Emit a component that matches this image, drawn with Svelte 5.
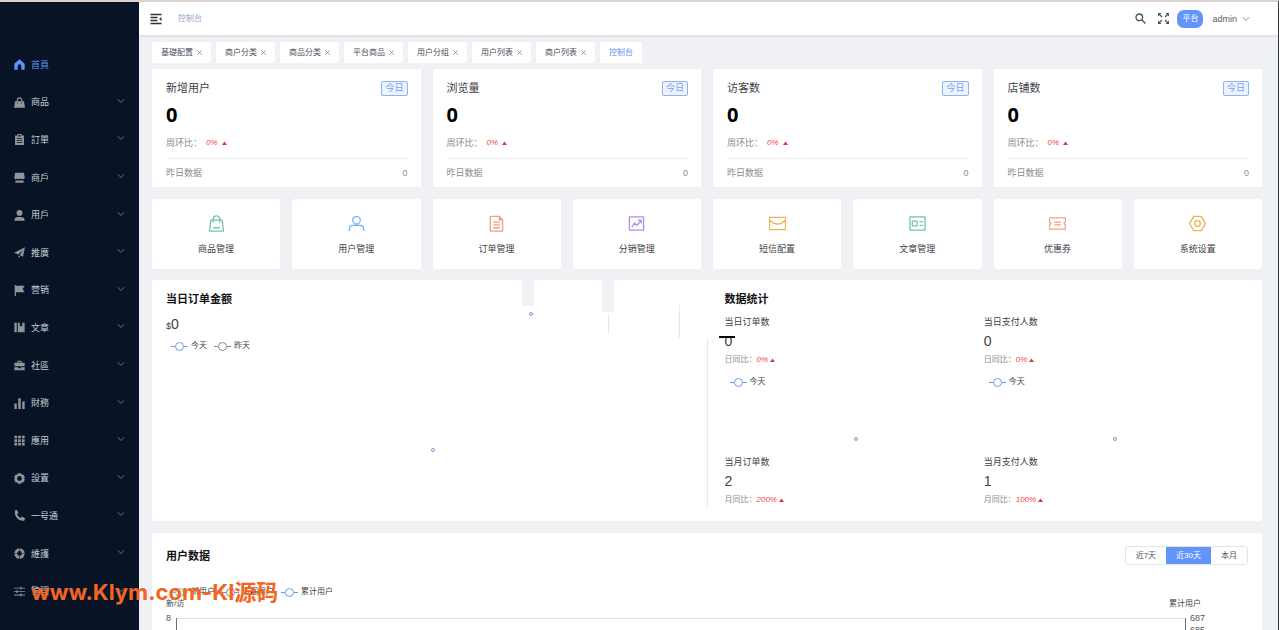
<script lang="ts">
	interface MenuItem {
		label: string;
		icon: string;
	}

	const menu: MenuItem[] = [
		{ label: '首頁', icon: 'home' },
		{ label: '商品', icon: 'bag' },
		{ label: '訂單', icon: 'order' },
		{ label: '商戶', icon: 'shop' },
		{ label: '用戶', icon: 'user' },
		{ label: '推廣', icon: 'plane' },
		{ label: '营销', icon: 'flag' },
		{ label: '文章', icon: 'book' },
		{ label: '社區', icon: 'case' },
		{ label: '財務', icon: 'bars' },
		{ label: '應用', icon: 'apps' },
		{ label: '設置', icon: 'gear' },
		{ label: '一号通', icon: 'phone' },
		{ label: '維護', icon: 'ring' },
		{ label: '管理', icon: 'sliders' }
	];

	// solid glyphs on a 16x16 grid
	const glyphs: Record<string, string> = {
		home: 'M8 .5.5 7v8.5h4.8v-5a2.7 2.7 0 0 1 5.4 0v5h4.8V7z',
		bag: 'M4 6V4.5a4 4 0 0 1 8 0V6h2.5L16 15.5H0L1.5 6zM5.5 6h5V4.5a2.5 2.5 0 0 0-5 0zM4.5 8v1.5h1V8zM10.5 8v1.5h1V8z',
		order: 'M5 0h6v2h3.5v14h-13V2H5zM6.5 1.5v2h3v-2zM4 6v1.2h8V6zM4 9v1.2h8V9zM4 12v1.2h8V12z',
		shop: 'M1.5 1h13L15.5 8v1.5c-1.5 1.5-2.5 1.5-3.5 0-1.5 1.5-3 1.5-4 0-1.5 1.5-3 1.5-4 0-1 1.5-2 1.5-3.5 0V8zM2 12.5h12v3H2z',
		user: 'M8 0a4.2 4.2 0 1 1 0 8.4A4.2 4.2 0 0 1 8 0zM.5 15.5c0-4 2.5-5.5 5-5.5h5c2.5 0 5 1.5 5 5.5z',
		plane: 'M16 .5 13 14l-4.5-2L13 4 6.5 11 0 8.5zM6.5 12.2 9 13.5 6.5 16z',
		flag: 'M1 0h1.8v1.2h12.7l-3 4.6 3 4.7H2.8V16H1z',
		book: 'M.5 1H4v14H.5zM5.5 1h3v6l1.7-1.5L12 7V1h3.5v14h-10z',
		case: 'M5 4V1h6v3h4.5v5H.5V4zM6.5 2.5V4h3V2.5zM.5 10.5H6V12h4v-1.500h5.500V15H.5z',
		bars: 'M.5 8H4v8H.5zM6.2.5h3.600V16H6.200zM12 5h3.500v11H12z',
		apps: 'M.5 1h4v3.8h-4zM6 1h4v3.8H6zM11.5 1h4v3.8h-4zM.5 6.2h4V10h-4zM6 6.2h4V10H6zM11.5 6.2h4V10h-4zM.5 11.4h4v3.8h-4zM6 11.4h4v3.8H6zM11.5 11.4h4v3.8h-4z',
		gear: 'M5.5.5h5l.7 2.2 2.3-.4L16 6.5 14.3 8 16 9.5l-2.5 4.2-2.3-.4-.7 2.2h-5l-.7-2.2-2.3.4L0 9.5 1.7 8 0 6.5l2.5-4.2 2.3.4zM8 4.5a3.5 3.5 0 1 0 0 7 3.5 3.5 0 0 0 0-7z',
		phone: 'M1.5.5 4.5 0l2 4.5-2 1.7c1 2.5 2.8 4.3 5.2 5.3l1.9-2L16 12l-.8 3.3C7 17.5-.5 9 1.5.5z',
		ring: 'M8 .5a7.5 7.5 0 1 1 0 15 7.5 7.5 0 0 1 0-15zM8 4.5a3.5 3.5 0 1 0 0 7 3.5 3.5 0 0 0 0-7zM7.5 0v4h1V0zM7.5 12v4h1v-4zM0 7.5v1h4v-1zM12 7.5v1h4v-1z',
		sliders: 'M0 2.5h9V1h1.8v1.5H16v1.2h-5.2V5H9V3.7H0zM0 7.5h3.5V6h1.8v1.5H16v1.2H5.3V10H3.5V8.7H0zM0 12.5h9V11h1.8v1.5H16v1.2h-5.2V15H9v-1.3H0z'
	};

	const tabs = ['基礎配置', '商户分类', '商品分类', '平台商品', '用户分组', '用户列表', '商户列表', '控制台'];

	const stats = ['新增用户', '浏览量', '访客数', '店铺数'];

	const shortcuts = [
		{ label: '商品管理', color: '#74c4b6', path: 'M3 5.5h12L16.5 17h-15zM5.5 8V4.5a3.5 3.5 0 0 1 7 0V8M5.5 13.5h7' },
		{ label: '用户管理', color: '#74b5f2', path: 'M9 1.5a4 4 0 1 1 0 8 4 4 0 0 1 0-8zM1.5 17v-2.5Q1.5 11 5 11h8q3.5 0 3.5 3.5V17' },
		{ label: '订单管理', color: '#eea184', path: 'M2.5 1.5H12L15.5 5v12h-13zM12 1.5V5h3.5M5.5 7.5h7M5.5 10.5h7M5.5 13.5h7' },
		{ label: '分销管理', color: '#b08fe2', path: 'M1.5 2h15v14h-15zM4 12.5l3-4L9.5 11 14 5.5M10.5 5.5H14V9' },
		{ label: '短信配置', color: '#e9b550', path: 'M.5 2.5h17v13H.5zM.5 5.5Q5 9.5 9 9.5t8.5-4' },
		{ label: '文章管理', color: '#74c4b6', path: 'M1 2h16v14H1zM3.5 6.5h5v5h-5zM11 7h4M11 11h4' },
		{ label: '优惠券', color: '#eea184', path: 'M.5 3h17v4L16 9l1.5 2v4H.5v-4L2 9 .5 7zM5.5 7.5h7M5.5 10.5h7' },
		{ label: '系统设置', color: '#e9b550', path: 'M5 1.5h8L17.5 9 13 16.5H5L.5 9zM9 6a3 3 0 1 1 0 6 3 3 0 0 1 0-6z' }
	];

	const metrics = [
		{ label: '当日订单数', value: 0, compare: '日同比：', rate: '0%', chart: true, struck: true },
		{ label: '当日支付人数', value: 0, compare: '日同比：', rate: '0%', chart: true },
		{ label: '当月订单数', value: 2, compare: '月同比：', rate: '200%' },
		{ label: '当月支付人数', value: 1, compare: '月同比：', rate: '100%' }
	];

	const ranges = ['近7天', '近30天', '本月'];

	let activeMenu = $state('首頁');
	let activeTab = $state('控制台');
	let activeRange = $state('近30天');
</script>

{#snippet chevron()}
	<svg class="chevron" viewBox="0 0 8 6" aria-hidden="true"><path d="M0.8 1.2 4 4.5 7.2 1.2" /></svg>
{/snippet}

{#snippet rise()}
	<svg class="rise" viewBox="0 0 5 4" aria-hidden="true"><path d="M0 4 2.5 0.5 5 4z" /></svg>
{/snippet}

{#snippet legend(label: string, color: string)}
	<span class="legend-item">
		<svg viewBox="0 0 17 10" stroke={color} aria-hidden="true">
			<path d="M0 5.5h4M13 5.5h4" /><circle cx="8.5" cy="5.5" r="4" />
		</svg>
		{label}
	</span>
{/snippet}

<div class="layout">
	<aside class="sidebar">
		<nav>
			{#each menu as item, i}
				<a href="#{item.icon}" class:active={item.label === activeMenu} onclick={() => (activeMenu = item.label)}>
					<svg class="menu-icon" viewBox="0 0 16 16" aria-hidden="true">
						<path d={glyphs[item.icon]} fill-rule="evenodd" />
					</svg>
					<span>{item.label}</span>
					{#if i > 0}{@render chevron()}{/if}
				</a>
			{/each}
		</nav>
	</aside>

	<div class="page">
		<header>
			<button class="icon-btn" aria-label="折叠菜单">
				<svg width="12" height="12" viewBox="0 0 12 12" fill="none" stroke="#333" stroke-width="1.3">
					<path d="M0.5 1.5h11M0.5 4.5h7M0.5 7.5h7M0.5 10.5h11" />
					<path d="M11.5 4v4L9 6z" fill="#333" stroke="none" />
				</svg>
			</button>
			<span class="crumb">控制台</span>
			<div class="tools">
				<button class="icon-btn" aria-label="搜索">
					<svg width="11" height="11" viewBox="0 0 11 11" fill="none" stroke="#505458" stroke-width="1.4">
						<circle cx="4.3" cy="4.3" r="3.3" /><path d="m6.8 6.8 3.6 3.6" />
					</svg>
				</button>
				<button class="icon-btn" aria-label="全屏">
					<svg width="11" height="11" viewBox="0 0 11 11" fill="#505458" stroke="#505458" stroke-width="1.3">
						<path d="m1 1 3 3M10 1 7 4M1 10l3-3M10 10 7 7" />
						<path d="M0 0h3.5L0 3.5zM11 0v3.5L7.5 0zM0 11V7.5L3.5 11zM11 11H7.5L11 7.5z" stroke="none" />
					</svg>
				</button>
				<span class="platform">平台</span>
				<button class="account">admin {@render chevron()}</button>
			</div>
		</header>

		<main>
			<div class="tabs">
				{#each tabs as tab}
					<div class="tab" class:active={tab === activeTab}>
						<button onclick={() => (activeTab = tab)}>{tab}</button>
						{#if tab !== '控制台'}
							<button class="close" aria-label="关闭{tab}">
								<svg width="5" height="5" viewBox="0 0 5 5"><path d="m0.3 0.3 4.4 4.4M4.7 0.3 0.3 4.7" /></svg>
							</button>
						{/if}
					</div>
				{/each}
			</div>

			<section class="stats">
				{#each stats as title}
					<article class="card stat">
						<div class="stat-head">
							<h3>{title}</h3>
							<span class="tag">今日</span>
						</div>
						<strong>0</strong>
						<p class="ratio">周环比：<em>0%</em>{@render rise()}</p>
						<div class="stat-foot"><span>昨日数据</span><span>0</span></div>
					</article>
				{/each}
			</section>

			<section class="shortcuts">
				{#each shortcuts as item}
					<a class="card shortcut" href="#{item.label}">
						<svg viewBox="0 0 18 18" stroke={item.color} aria-hidden="true"><path d={item.path} /></svg>
						{item.label}
					</a>
				{/each}
			</section>

			<section class="card overview">
				<span class="notch first"></span>
				<span class="notch second"></span>
				<span class="seam left"></span>
				<span class="seam right"></span>
				<span class="point stray"></span>
				<div class="sales">
					<h2>当日订单金额</h2>
					<p class="amount"><small>$</small>0</p>
					<div class="legend">
						{@render legend('今天', '#6b9ae8')}
						{@render legend('昨天', '#8386a4')}
					</div>
					<div class="sales-chart"><span class="point"></span></div>
				</div>
				<div class="divider"></div>
				<div class="summary">
					<h2>数据统计</h2>
					<div class="metrics">
						{#each metrics as metric}
							<div class="metric" class:struck={metric.struck}>
								<h4>{metric.label}</h4>
								<p class="value">{metric.value}</p>
								<p class="compare">{metric.compare}<em>{metric.rate}</em>{@render rise()}</p>
								{#if metric.chart}
									<div class="legend">{@render legend('今天', '#6b9ae8')}</div>
									<div class="metric-chart"><span class="point"></span></div>
								{/if}
							</div>
						{/each}
					</div>
				</div>
			</section>

			<section class="card users">
				<div class="users-head">
					<h2>用户数据</h2>
					<div class="ranges">
						{#each ranges as range}
							<button class:active={range === activeRange} onclick={() => (activeRange = range)}>{range}</button>
						{/each}
					</div>
				</div>
				<div class="legend">
					{@render legend('新用户', '#5ec9a0')}
					{@render legend('访客用户', '#8386a4')}
					{@render legend('累计用户', '#6b9ae8')}
				</div>
				<div class="axis-names"><span>新/访</span><span>累计用户</span></div>
				<div class="plot">
					<div class="scale"><span>8</span></div>
					<div class="grid"></div>
					<div class="scale"><span>687</span><span>685</span></div>
				</div>
			</section>
		</main>
	</div>

	<div class="watermark">www.Klym.com-KI源码</div>
</div>

<style>
	:global(body) {
		background: #eff1f5;
	}

	.layout {
		position: relative;
		display: grid;
		grid-template-columns: 139px 1fr;
		height: 100vh;
		box-sizing: border-box;
		overflow: hidden;
		border-top: 2px solid #ddd2cf;
		border-right: 1px solid #34383d;
		color: #404246;
		font-family: 'Liberation Sans', 'Noto Sans CJK SC', sans-serif;
		font-size: 9px;
		line-height: 14px;
	}

	h2, h3, h4, p {
		margin: 0;
		font-weight: 400;
	}

	h2 {
		color: #111;
		font-size: 11px;
		font-weight: 700;
		line-height: 16px;
	}

	button {
		padding: 0;
		border: 0;
		background: none;
		color: inherit;
		font: inherit;
		cursor: pointer;
	}

	a {
		color: inherit;
		text-decoration: none;
	}

	svg {
		flex: none;
		display: block;
	}

	/* Sidebar */
	.sidebar {
		background: #081425;
		color: #c3cbd6;
	}

	nav {
		display: grid;
		grid-auto-rows: 1fr;
		height: 564px;
		padding-top: 44px;
	}

	nav a {
		display: flex;
		align-items: center;
		gap: 6px;
		padding: 0 14px;
	}

	nav a.active {
		color: #6394f9;
	}

	.menu-icon {
		width: 11px;
		height: 11px;
		fill: #919499;
	}

	.active .menu-icon {
		fill: #6394f9;
	}

	.chevron {
		width: 8px;
		height: 6px;
		fill: none;
		stroke: #909399;
		stroke-width: 1;
	}

	nav .chevron {
		margin: 0 0 3px auto;
		stroke: #67707e;
	}

	/* Top bar */
	.page {
		min-width: 0;
	}

	header {
		display: flex;
		align-items: center;
		gap: 16px;
		height: 33px;
		padding: 0 28px 0 11px;
		background: #fff;
		box-shadow: 0 1px 3px rgba(0, 21, 41, 0.12);
	}

	.crumb {
		color: #97a8be;
		font-size: 8px;
	}

	.tools {
		display: flex;
		align-items: center;
		margin-left: auto;
	}

	.tools .icon-btn {
		margin-right: 12px;
	}

	.tools .icon-btn + .icon-btn {
		margin-right: 8px;
	}

	.platform {
		padding: 2px 5px;
		border-radius: 7px;
		background: #6394f9;
		color: #fff;
		font-size: 8px;
	}

	.account {
		display: flex;
		align-items: center;
		gap: 5px;
		margin-left: 9px;
		color: #5a5e66;
	}

	main {
		display: grid;
		gap: 12px;
		padding: 7px 16px 0 13px;
	}

	/* Open pages */
	.tabs {
		display: flex;
		gap: 5px;
		margin-bottom: -6px;
	}

	.tab {
		display: flex;
		align-items: center;
		gap: 4px;
		height: 21px;
		padding: 0 9px;
		background: #fff;
		color: #495060;
		font-size: 8px;
	}

	.tab.active {
		color: #6394f9;
	}

	.close path {
		stroke: #7f858e;
		stroke-width: 0.8;
	}

	.card {
		border-radius: 3px;
		background: #fff;
	}

	/* Stat cards */
	.stats {
		display: grid;
		grid-template-columns: repeat(4, 1fr);
		gap: 12px;
	}

	.stat {
		padding: 12px 13px 0 14px;
		border-radius: 0;
	}

	.stat-head,
	.stat-foot {
		display: flex;
		align-items: center;
		justify-content: space-between;
	}

	.stat h3 {
		font-size: 11px;
		line-height: 15px;
	}

	.tag {
		padding: 0 3px;
		border: 1px solid #8eb1f6;
		border-radius: 2px;
		background: #edf3ff;
		color: #7aa0f0;
		line-height: 13px;
	}

	.stat strong {
		display: block;
		margin-top: 5px;
		color: #000;
		font-family: 'Noto Sans', sans-serif;
		font-size: 20px;
		line-height: 28px;
	}

	.ratio,
	.compare {
		display: flex;
		align-items: center;
		color: #8c8c8c;
	}

	.ratio {
		gap: 4px;
		margin: 7px 0 8px;
	}

	.compare {
		font-size: 8px;
	}

	em {
		color: #f5424c;
		font-size: 8px;
	}

	.rise {
		width: 5px;
		height: 4px;
		fill: #e0323c;
	}

	.compare .rise {
		margin-left: 2px;
	}

	.stat-foot {
		height: 28px;
		border-top: 1px solid #eee;
		color: #8c8c8c;
	}

	/* Shortcuts */
	.shortcuts {
		display: grid;
		grid-template-columns: repeat(8, 1fr);
		gap: 12px;
	}

	.shortcut {
		display: grid;
		justify-items: center;
		gap: 10px;
		padding: 16px 0 13px;
	}

	.shortcut svg {
		width: 17px;
		height: 17px;
		fill: none;
		stroke-width: 1.4;
		stroke-linejoin: round;
	}

	/* Orders and totals */
	.overview {
		position: relative;
		display: grid;
		grid-template-columns: 1fr 1px 1fr;
		margin-top: -1px;
	}

	.sales {
		display: flex;
		flex-direction: column;
		padding: 11px 6px 14px 14px;
	}

	.amount {
		margin: 8px 0 5px;
		font-size: 14px;
		line-height: 18px;
	}

	.amount small {
		font-size: 9px;
	}

	.legend {
		display: flex;
		gap: 7px;
		padding-left: 5px;
		font-size: 8px;
		line-height: 12px;
	}

	.legend-item {
		display: flex;
		align-items: center;
		gap: 3px;
	}

	.legend svg {
		width: 17px;
		height: 10px;
		fill: none;
	}

	.sales-chart,
	.metric-chart {
		display: grid;
		justify-items: center;
	}

	.sales-chart {
		flex: 1;
		align-items: center;
		padding-top: 40px;
	}

	.point {
		width: 2px;
		height: 2px;
		border: 1px solid #7c97cf;
		border-radius: 50%;
		background: #fff;
	}

	.divider {
		margin: 58px 0 13px;
		background: #e6e8eb;
	}

	.summary {
		padding: 11px 19px 14px 17px;
	}

	.metrics {
		display: grid;
		grid-template-columns: 1fr 1fr;
		margin-top: 8px;
	}

	.metric {
		position: relative;
	}

	.metric h4 {
		font-size: 9px;
	}

	.struck::after {
		content: '';
		position: absolute;
		top: 21px;
		left: -6px;
		width: 16px;
		height: 2px;
		background: #000;
	}

	.value {
		margin: 3px 0;
		font-size: 14px;
		line-height: 18px;
	}

	.metric .legend {
		margin-top: 9px;
	}

	.metric-chart {
		height: 67px;
		box-sizing: border-box;
		align-items: end;
		padding: 0 0 14px 4px;
	}

	.notch,
	.seam,
	.stray {
		position: absolute;
	}

	.notch {
		top: 0;
		width: 12px;
		background: #eff1f5;
	}

	.notch.first {
		left: 370px;
		height: 26px;
	}

	.notch.second {
		left: 450px;
		height: 32px;
	}

	.seam {
		width: 1px;
		background: #e6e8eb;
	}

	.seam.left {
		top: 34px;
		left: 456px;
		height: 20px;
	}

	.seam.right {
		top: 25px;
		left: 527px;
		height: 33px;
	}

	.stray {
		top: 32px;
		left: 377px;
	}

	/* User trend */
	.users {
		height: 240px;
		padding: 13px 14px 0;
	}

	.users-head {
		display: flex;
		align-items: center;
		justify-content: space-between;
		margin-bottom: 21px;
	}

	.ranges {
		display: flex;
		border: 1px solid #e1e4ea;
		border-radius: 3px;
		overflow: hidden;
	}

	.ranges button {
		padding: 0 10px;
		color: #505458;
		font-size: 8px;
		line-height: 17px;
	}

	.ranges button.active {
		background: #6394f9;
		color: #fff;
	}

	.axis-names {
		display: flex;
		justify-content: space-between;
		padding-right: 47px;
		font-size: 8px;
		line-height: 12px;
	}

	.plot {
		display: grid;
		grid-template-columns: 10px 1fr 62px;
		height: 100px;
		margin-top: 8px;
		font-size: 9px;
	}

	.grid {
		border: solid #6e7079;
		border-width: 0 1px;
		background: linear-gradient(#e0e2e6, #e0e2e6) 0 0 / 100% 1px no-repeat;
	}

	.scale {
		display: grid;
		grid-auto-rows: 12px;
		margin-top: -6px;
		line-height: 12px;
		color: #555;
	}

	.scale:last-child {
		padding-left: 4px;
	}

	.watermark {
		position: absolute;
		left: 31px;
		bottom: 23px;
		color: #f26522;
		font-family: 'Inter', 'Noto Sans CJK SC', sans-serif;
		font-size: 22px;
		font-weight: 700;
		line-height: 30px;
		white-space: nowrap;
		pointer-events: none;
	}
</style>
